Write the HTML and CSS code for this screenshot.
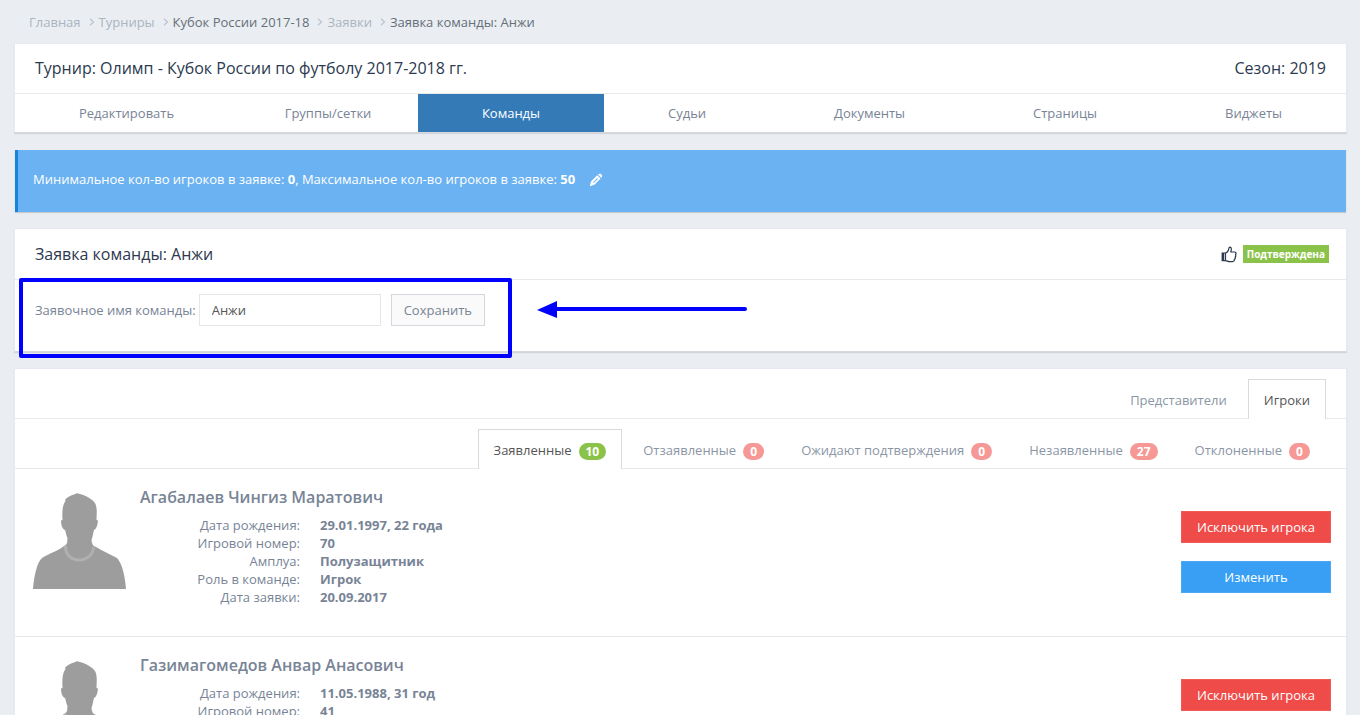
FILE: index.html
```html
<!DOCTYPE html>
<html lang="ru">
<head>
<meta charset="utf-8">
<title>Заявка команды: Анжи</title>
<link rel="stylesheet" href="styles.css">
</head>
<body>
<svg class="defs" aria-hidden="true">
  <symbol id="chevron" viewBox="0 0 6 8"><path d="M1 .7 4.5 4 1 7.300" fill="none" stroke="currentColor" stroke-width="1.300"/></symbol>
  <symbol id="avatar" viewBox="0 0 120 120">
    <path fill="#9d9d9d" d="M13 109C14 96 17 82 22 78C30 73 38 71 44 66C48 64 47 62 47.500 58C46 55 46 52 45 50C42 49 41 44 41 40.500L42.500 40C42 31 42.500 25 45.500 21L45 20C48 16 53 15 57.500 13.300C64 15 72 18 75.500 24C77.500 29 76.500 35 76.500 40L78 40.500C77.500 45 76.500 49 74 50C73 54 72.500 57 71.500 60C72 64 73 66 76 67C82 71 90 74 97 78C102 83 105 96 106 109Z"/>
    <path fill="none" stroke="#b0b0b0" stroke-width="3" d="M45.500 66C45 85 73 84 73.500 67"/>
  </symbol>
</svg>

<nav class="crumbs" aria-label="Навигация">
  <a href="#">Главная</a><svg class="chevron"><use href="#chevron"/></svg>
  <a href="#">Турниры</a><svg class="chevron"><use href="#chevron"/></svg>
  <a class="dark" href="#">Кубок России 2017-18</a><svg class="chevron"><use href="#chevron"/></svg>
  <a href="#">Заявки</a><svg class="chevron"><use href="#chevron"/></svg>
  <span class="dark">Заявка команды: Анжи</span>
</nav>

<main>
  <section class="panel">
    <header class="panel-head">
      <h1>Турнир: Олимп - Кубок России по футболу 2017-2018 гг.</h1>
      <h2>Сезон: 2019</h2>
    </header>
    <nav class="menu">
      <a href="#">Редактировать</a>
      <a class="compact" href="#">Группы/сетки</a>
      <a class="active" href="#">Команды</a>
      <a href="#">Судьи</a>
      <a href="#">Документы</a>
      <a href="#">Страницы</a>
      <a href="#">Виджеты</a>
    </nav>
  </section>

  <section class="notice">
    <span>Минимальное кол-во игроков в заявке: <b>0</b>, Максимальное кол-во игроков в заявке: <b>50</b></span>
    <button class="edit" type="button" aria-label="Изменить">
      <svg width="14" height="14" viewBox="0 0 14 14"><path fill="currentColor" fill-rule="evenodd" d="M.8 13.200 2 8.500 8.200 2.300 11.600 5.600 5.400 11.800ZM9 1.500C9.900.7 11 .5 11.900 1.100C12.900 1.800 13.600 2.900 12.900 3.900L12.300 4.800ZM4 9.400 4.700 10 9 5.800 8.300 5.100Z"/></svg>
    </button>
  </section>

  <section class="panel">
    <header class="panel-head tall">
      <h2>Заявка команды: Анжи</h2>
      <div class="status">
        <svg width="16" height="17" viewBox="0 0 16 17"><path fill="none" stroke="currentColor" stroke-width="1.200" stroke-linejoin="round" d="M4.500 7C6.500 6.500 7.500 4.500 7.700 3C7.900 1.800 8.200 1.200 9 1.200C10.500 1.300 10.700 3.500 9.700 6H13.500C15.200 6 15.300 7.800 14.500 8.500C15 9.500 14.700 10.500 14.200 11C14.500 12 14 13 13.400 13.300C13.500 15 12.500 15.700 11 15.700H8.500C7 15.600 6 14.800 4.500 14.600Z"/><path fill="none" stroke="currentColor" stroke-width="1.200" d="M4.500 7H1.200V14.600H4.500"/><path fill="currentColor" d="M1 7H3.200V14.500H1Z"/></svg>
        <span class="label">Подтверждена</span>
      </div>
    </header>
    <div class="panel-body">
      <form class="name-form">
        <label for="team-name">Заявочное имя команды:</label>
        <input id="team-name" type="text" value="Анжи">
        <button class="btn" type="button">Сохранить</button>
      </form>
      <div class="highlight"></div>
      <svg class="arrow" width="210" height="18" viewBox="0 0 210 18" aria-hidden="true"><path fill="#00f" d="M0 9 20 0V17Z"/><path stroke="#00f" stroke-width="4" stroke-linecap="round" d="M19 8H208"/></svg>
    </div>
  </section>

  <section class="panel">
    <nav class="tabs">
      <a href="#">Представители</a>
      <a class="active" href="#">Игроки</a>
    </nav>
    <nav class="tabs">
      <a class="active" href="#">Заявленные<span class="badge green">10</span></a>
      <a href="#">Отзаявленные<span class="badge">0</span></a>
      <a href="#">Ожидают подтверждения<span class="badge">0</span></a>
      <a href="#">Незаявленные<span class="badge">27</span></a>
      <a href="#">Отклоненные<span class="badge">0</span></a>
    </nav>

    <article class="player">
      <svg class="avatar"><use href="#avatar"/></svg>
      <div class="info">
        <h3>Агабалаев Чингиз Маратович</h3>
        <dl>
          <dt>Дата рождения:</dt><dd>29.01.1997, 22 года</dd>
          <dt>Игровой номер:</dt><dd>70</dd>
          <dt>Амплуа:</dt><dd>Полузащитник</dd>
          <dt>Роль в команде:</dt><dd>Игрок</dd>
          <dt>Дата заявки:</dt><dd>20.09.2017</dd>
        </dl>
      </div>
      <div class="actions">
        <button class="btn red" type="button">Исключить игрока</button>
        <button class="btn blue" type="button">Изменить</button>
      </div>
    </article>

    <article class="player">
      <svg class="avatar"><use href="#avatar"/></svg>
      <div class="info">
        <h3>Газимагомедов Анвар Анасович</h3>
        <dl>
          <dt>Дата рождения:</dt><dd>11.05.1988, 31 год</dd>
          <dt>Игровой номер:</dt><dd>41</dd>
        </dl>
      </div>
      <div class="actions">
        <button class="btn red" type="button">Исключить игрока</button>
      </div>
    </article>
  </section>
</main>
</body>
</html>
```

FILE: styles.css
```css
* { box-sizing: border-box; }

html { overflow: hidden; }

body {
  margin: 0;
  height: 100vh;
  overflow: hidden;
  background: #eaeef3;
  color: #788496;
  font: 13px/18px "Open Sans", "Noto Sans", sans-serif;
}

a { color: inherit; text-decoration: none; }
h1, h2, h3, dl, dd { margin: 0; }
.defs { position: absolute; width: 0; height: 0; }

.crumbs {
  display: flex;
  align-items: center;
  padding: 13px 29px 12px;
  color: #aab5c0;
}
.crumbs .dark { color: #666e78; }
.chevron { width: 6px; height: 8px; margin: 0 4px 0 8px; color: #bcc4cc; }

main {
  display: flex;
  flex-direction: column;
  gap: 16px;
  padding: 0 13px 0 14px;
}

.panel {
  background: #fff;
  border: 1px solid #e7eaf0;
  border-bottom-color: #d5d8dc;
  box-shadow: 0 1px 1px rgba(0, 0, 0, .1);
}
.panel-head {
  display: flex;
  justify-content: space-between;
  align-items: center;
  min-height: 50px;
  padding: 0 17px 2px 20px;
  border-bottom: 1px solid #e7eaec;
  color: #2c394f;
}
.panel-head.tall { min-height: 51px; padding-bottom: 0; }
h1, h2 { font-size: 16px; line-height: 22px; font-weight: 500; }
.panel-head h1 + h2 { padding-right: 3px; }

.menu { display: flex; }
.menu a {
  flex: 1 1 auto;
  padding: 10px 15px;
  text-align: center;
}
.menu .compact { flex-basis: 82px; }
.menu .active { background: #337ab7; color: #fff; }

.notice {
  display: flex;
  align-items: flex-start;
  gap: 14px;
  min-height: 62px;
  margin: 1px 1px 0;
  padding: 20px 15px;
  border-left: 3px solid #1683dd;
  background: #6ab2f1;
  color: #fff;
  box-shadow: 0 1px 1px rgba(0, 0, 0, .15);
}
.edit {
  display: flex;
  padding: 3px 0;
  border: 0;
  background: none;
  color: inherit;
}

.status { display: flex; align-items: center; gap: 6px; }
.label {
  padding: 0 4px;
  background: #8bc34a;
  color: #fff;
  font-size: 10px;
  font-weight: 700;
}

.panel-body { position: relative; padding: 14px 20px 25px; }
.name-form { display: flex; align-items: center; }
.name-form input {
  width: 182px;
  height: 32px;
  margin: 0 10px 0 3px;
  padding: 0 12px;
  border: 1px solid #e5e6e7;
  color: #555;
  font: inherit;
}
.btn {
  height: 32px;
  padding: 0 12px;
  border: 1px solid #d3d8de;
  background: #fafafa;
  color: #788496;
  font: inherit;
}
.highlight {
  position: absolute;
  left: 4px;
  top: -2px;
  width: 493px;
  height: 80px;
  border: 4px solid #00f;
  border-radius: 2px;
  pointer-events: none;
}
.arrow { position: absolute; left: 522px; top: 21px; }

.tabs {
  display: flex;
  justify-content: flex-end;
  gap: 5px;
  height: 50px;
  padding: 10px 20px 0;
  border-bottom: 1px solid #e7eaec;
  color: #8b96a5;
}
.tabs a {
  display: flex;
  align-items: center;
  gap: 7px;
  height: 40px;
  padding: 0 15px;
  border: 1px solid transparent;
  border-bottom: 0;
}
.tabs .active {
  border-color: #d9dadc;
  background: #fff;
  color: #555;
}
.badge {
  min-width: 21px;
  margin-top: 4px;
  padding: 0 7px;
  border-radius: 9px;
  background: #f69996;
  color: #fff;
  font-size: 12px;
  line-height: 17px;
  font-weight: 700;
  text-align: center;
}
.badge.green { background: #8bc34a; }

.player {
  display: flex;
  min-height: 168px;
  padding: 11px 15px 0 5px;
  border-bottom: 1px solid #e7eaec;
}
.avatar { width: 120px; height: 120px; flex: none; }
.info { flex: 1; padding-top: 6px; }
h3 { font-size: 16px; line-height: 22px; font-weight: 600; }
dl {
  display: grid;
  grid-template-columns: 160px 1fr;
  column-gap: 20px;
  margin-top: 8px;
}
dt { text-align: right; }
dd { font-weight: 700; }

.actions {
  display: flex;
  flex-direction: column;
  gap: 18px;
  width: 150px;
  padding-top: 31px;
}
.red { border-color: #f25a58; background: #ef4b49; color: #fff; }
.blue { border-color: #4aa8f7; background: #389ff5; color: #fff; }
```
